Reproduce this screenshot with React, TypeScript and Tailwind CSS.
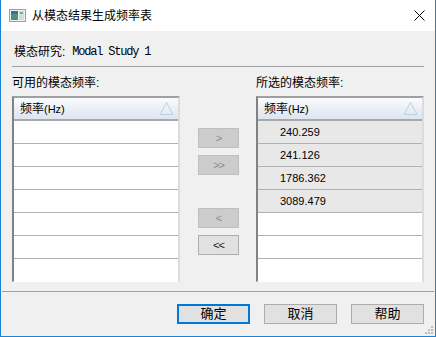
import React from 'react';

const font = { fontFamily: '"Liberation Sans", "Noto Sans CJK SC", sans-serif' };

const SortIcon = () => (
  <svg width="15" height="15" viewBox="0 0 15 15" className="shrink-0">
    <path d="M7.5 1.5 L14 13.5 L1 13.5 Z" fill="none" stroke="#bcd0e6" strokeWidth="1" />
  </svg>
);

const FreqList = ({ values }: { values: string[] }) => {
  const rows = Array.from({ length: 7 }, (_, i) => values[i] ?? null);
  return (
    <div className="flex h-[186px] w-[168px] flex-col border-t-2 border-r-2 border-b border-l-2 border-t-[#a0a0a0] border-r-[#dcdcdc] border-b-[#e3e3e3] border-l-[#828282] bg-white">
      <div className="flex h-[23px] shrink-0 items-center justify-between border-b-2 border-[#a9a9a9] bg-gradient-to-b from-[#fafbfd] to-[#dde5ef] pr-[4px] pl-[6px]">
        <span className="flex items-baseline text-[12px] text-black">
          频率<span className="text-[11px]">(Hz)</span>
        </span>
        <SortIcon />
      </div>
      {rows.map((v, i) => (
        <div
          key={i}
          className={`flex h-[23px] shrink-0 items-center pl-[22px] text-[11px] text-black ${
            i < 6 ? 'border-b border-[#b0b0b0]' : ''
          } ${v ? 'bg-[#e8e8e8]' : 'bg-white'}`}
        >
          {v}
        </div>
      ))}
    </div>
  );
};

const SmallButton = ({ label, disabled }: { label: string; disabled?: boolean }) => (
  <div
    className={`flex h-[20px] w-[41px] items-center justify-center border text-[11px] tracking-[-1px] ${
      disabled ? 'border-[#bfbfbf] bg-[#cccccc] text-[#8d8d8d]' : 'border-[#adadad] bg-[#e1e1e1] text-[#202020]'
    }`}
  >
    {label}
  </div>
);

const DialogButton = ({ label, primary }: { label: string; primary?: boolean }) => (
  <div
    className={`flex h-[20px] w-[73px] items-center justify-center bg-[#e1e1e1] text-[13px] text-black ${
      primary ? 'border-2 border-[#0078d7]' : 'border border-[#adadad]'
    }`}
  >
    {label}
  </div>
);

const App = () => {
  return (
    <div className="flex h-[337px] w-[436px] flex-col border-x border-b border-[#1883d7] bg-[#f0f0f0]" style={font}>
      <div className="flex h-[31px] shrink-0 items-center bg-white pr-[10px] pl-[8px]">
        <svg width="17" height="14" viewBox="0 0 17 14">
          <rect x="0.5" y="0.5" width="16" height="12" fill="#eef0f0" stroke="#9aa0a4" />
          <rect x="2" y="2" width="7" height="9" fill="#4f8f86" />
          <rect x="2" y="2" width="7" height="3" fill="#3f6f9f" />
          <rect x="10" y="2" width="5" height="9" fill="#d4dcdc" />
          <rect x="11" y="3" width="3" height="2" fill="#6fae8a" />
        </svg>
        <span className="ml-[6px] text-[12px] text-black">从模态结果生成频率表</span>
        <div className="flex-1" />
        <svg width="11" height="11" viewBox="0 0 11 11">
          <path d="M0.5 0.5 L10.5 10.5 M10.5 0.5 L0.5 10.5" stroke="#000" strokeWidth="1" />
        </svg>
      </div>

      <div className="flex h-[35px] shrink-0 items-center pt-[7px] pl-[13px] text-[12px] text-black">
        <span>模态研究:</span>
        <span
          className="ml-[7px] tracking-[-1.2px]"
          style={{ fontFamily: '"Liberation Mono", monospace' }}
        >
          Modal Study 1
        </span>
      </div>
      <div className="mx-[11px] h-px shrink-0 bg-[#a0a0a0]" />

      <div className="flex shrink-0 pl-[11px]">
        <div className="flex flex-col">
          <div className="h-[29px] pt-[8px] text-[12px] leading-[16px] text-black">可用的模态频率:</div>
          <FreqList values={[]} />
        </div>
        <div className="flex w-[76px] flex-col items-center pt-[61px] pl-[1px]">
          <SmallButton label=">" disabled />
          <div className="h-[7px]" />
          <SmallButton label=">>" disabled />
          <div className="h-[33px]" />
          <SmallButton label="<" disabled />
          <div className="h-[7px]" />
          <SmallButton label="<<" />
        </div>
        <div className="flex flex-col">
          <div className="h-[29px] pt-[8px] text-[12px] leading-[16px] text-black">所选的模态频率:</div>
          <FreqList values={['240.259', '241.126', '1786.362', '3089.479']} />
        </div>
      </div>

      <div className="mt-[9px] ml-[1px] mr-[1px] h-px shrink-0 bg-[#a0a0a0]" />

      <div className="flex shrink-0 justify-end gap-[14px] pt-[12px] pr-[11px]">
        <DialogButton label="确定" primary />
        <DialogButton label="取消" />
        <DialogButton label="帮助" />
      </div>

      <div className="flex flex-1 items-end justify-end pr-[2px] pb-[2px]">
        <svg width="9" height="9" viewBox="0 0 9 9">
          <rect x="7" y="1" width="2" height="2" fill="#bdbdbd" />
          <rect x="4" y="4" width="2" height="2" fill="#bdbdbd" />
          <rect x="7" y="4" width="2" height="2" fill="#bdbdbd" />
          <rect x="1" y="7" width="2" height="2" fill="#bdbdbd" />
          <rect x="4" y="7" width="2" height="2" fill="#bdbdbd" />
          <rect x="7" y="7" width="2" height="2" fill="#bdbdbd" />
        </svg>
      </div>
    </div>
  );
};

export default App;
